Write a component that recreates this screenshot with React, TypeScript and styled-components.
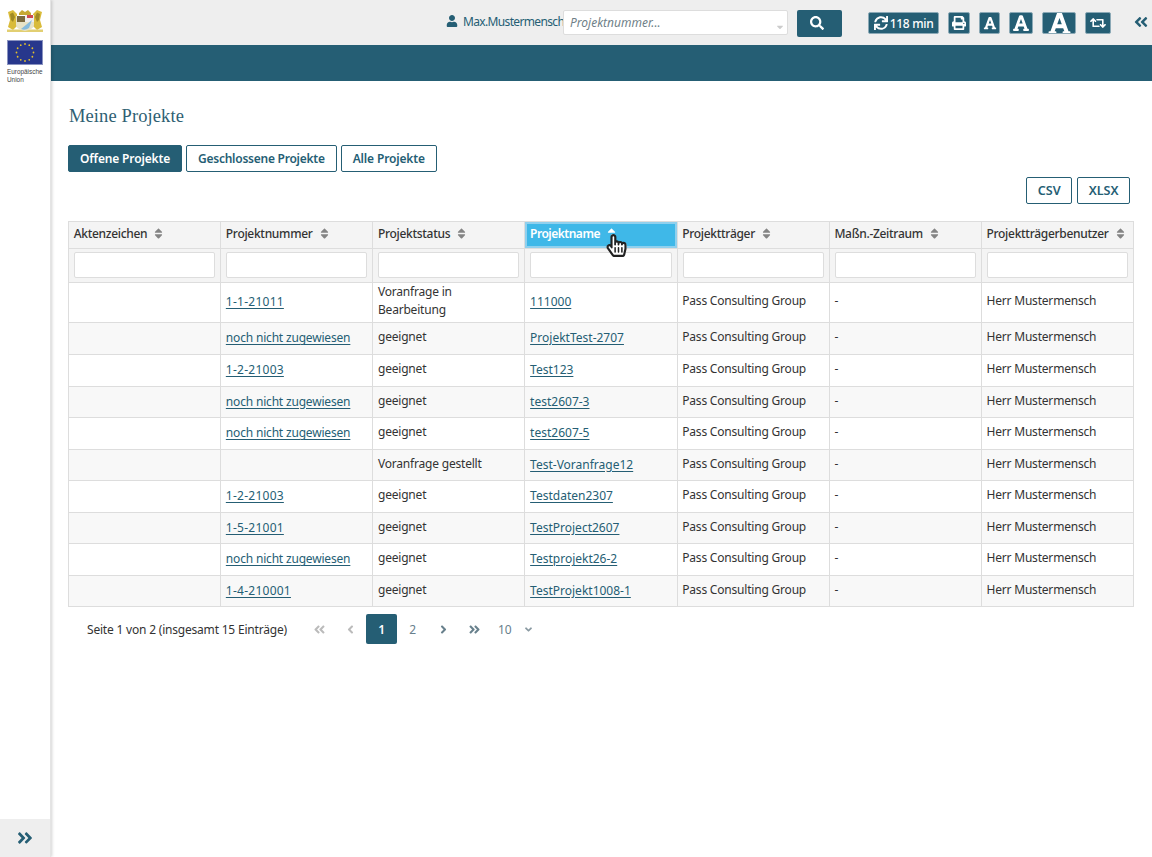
import React from "react";
import styled, { createGlobalStyle } from "styled-components";
import {
  FaUser, FaSearch, FaSync, FaPrint, FaFont, FaRetweet, FaAngleDoubleLeft, FaAngleDoubleRight,
  FaAngleLeft, FaAngleRight, FaAngleDown, FaSort, FaSortUp, FaRegHandPointer, FaHandPointer, FaCaretDown,
} from "react-icons/fa";

const TEAL = "#255e74";
const SANS = `"Noto Sans", "Liberation Sans", sans-serif`;

const Global = createGlobalStyle`
  html, body { margin: 0; padding: 0; background: #fff; }
  body { font-family: ${SANS}; font-size: 13px; color: #333; }
  * { box-sizing: border-box; }
`;

const Page = styled.div`
  display: flex;
  width: 1152px;
  height: 857px;
  overflow: hidden;
`;

const Sidebar = styled.aside`
  width: 51px;
  flex: none;
  display: flex;
  flex-direction: column;
  background: #fff;
  border-right: 1px solid #e4e4e4;
  box-shadow: 1px 0 3px rgba(0, 0, 0, 0.18);
  z-index: 1;
`;

const Logos = styled.div`
  flex: 1;
  display: flex;
  flex-direction: column;
  padding: 9px 0 0 7px;
`;

const EuCaption = styled.div`
  font-family: "Liberation Sans", sans-serif;
  font-size: 6.4px;
  line-height: 7.5px;
  color: #444;
  margin-top: 3px;
`;

const Crest = styled.svg`
  display: block;
  filter: blur(0.35px);
`;

const Flag = styled.svg`
  margin-top: 8px;
  display: block;
`;

const SideFooter = styled.div`
  height: 38px;
  background: #eee;
  display: flex;
  align-items: center;
  justify-content: center;
  color: ${TEAL};
  font-size: 18px;
`;

const Main = styled.main`
  flex: 1;
  display: flex;
  flex-direction: column;
  min-width: 0;
`;

const TopBar = styled.header`
  height: 45px;
  background: #eee;
  display: flex;
  align-items: flex-start;
  padding-top: 10px;
`;

const UserName = styled.div`
  margin-left: 395px;
  width: 117px;
  height: 22px;
  display: flex;
  align-items: center;
  gap: 5px;
  color: ${TEAL};
  font-size: 12px;
  letter-spacing: -0.65px;
  white-space: nowrap;
  svg { font-size: 12px; flex: none; }
`;

const SearchBox = styled.div`
  width: 225px;
  height: 25px;
  background: #fff;
  border: 1px solid #ddd;
  border-radius: 2px;
  display: flex;
  align-items: center;
  justify-content: space-between;
  padding: 0 2px 0 6px;
  font-size: 12px;
  font-style: italic;
  color: #6f7f88;
  svg { color: #ccc; font-size: 10px; margin-top: 9px; }
`;

const SearchButton = styled.button`
  width: 45px;
  height: 27px;
  margin-left: 9px;
  border: 0;
  border-radius: 2px;
  background: ${TEAL};
  color: #fff;
  padding: 0 5px 2px 0;
  font-size: 14px;
  display: flex;
  align-items: center;
  justify-content: center;
`;

const Tools = styled.div`
  display: flex;
  align-items: center;
  height: 22px;
  margin-top: 2px;
  margin-left: 26px;
  gap: 9px;
`;

const ToolButton = styled.button<{ $w: number; $icon?: number }>`
  width: ${(p) => p.$w}px;
  height: 22px;
  border: 1px solid #8ba9b6;
  border-radius: 2px;
  background: ${TEAL};
  color: #fff;
  padding: 0;
  display: flex;
  align-items: center;
  justify-content: center;
  gap: 2px;
  overflow: hidden;
  font-family: ${SANS};
  font-size: 12px;
  font-weight: 500;
  letter-spacing: -0.3px;
  white-space: nowrap;
  svg { font-size: ${(p) => p.$icon ?? 14}px; flex: none; }
`;

const CollapseLeft = styled.div`
  margin-left: 22px;
  margin-top: 4px;
  color: ${TEAL};
  font-size: 16px;
  display: flex;
`;

const Band = styled.div`
  height: 36px;
  background: ${TEAL};
`;

const Content = styled.div`
  flex: 1;
  padding: 24px 18px 0 17px;
`;

const Title = styled.h1`
  margin: 0;
  padding-left: 1px;
  font-family: "Liberation Serif", serif;
  font-weight: 400;
  font-size: 18.5px;
  line-height: 22px;
  letter-spacing: 0.1px;
  color: #2f5f73;
`;

const TabRow = styled.div`
  display: flex;
  gap: 4px;
  margin-top: 18px;
`;

const OutlineButton = styled.button<{ $active?: boolean; $tight?: boolean }>`
  height: 27px;
  padding: 0 11px;
  border: 1px solid ${TEAL};
  border-radius: 2px;
  background: ${(p) => (p.$active ? TEAL : "#fff")};
  color: ${(p) => (p.$active ? "#fff" : TEAL)};
  font-family: ${SANS};
  font-size: 12px;
  font-weight: 600;
  letter-spacing: ${(p) => (p.$tight ? "-0.25px" : "-0.15px")};
  white-space: nowrap;
`;

const ExportButton = styled(OutlineButton)`
  padding: 0 10.5px;
  font-size: 12.6px;
  letter-spacing: 0;
`;

const ExportRow = styled.div`
  display: flex;
  justify-content: flex-end;
  gap: 5px;
  margin-top: 5px;
  height: 27px;
  padding-right: 4px;
`;

const Table = styled.table`
  width: 1066px;
  margin-top: 17px;
  border-collapse: collapse;
  table-layout: fixed;
  font-size: 12px;
  letter-spacing: -0.2px;
`;

const HeadCell = styled.th<{ $active?: boolean }>`
  position: relative;
  height: 27px;
  padding: 0 4px 3px 4.7px;
  border: 1px solid #ddd;
  text-align: left;
  white-space: nowrap;
  letter-spacing: ${(p) => (p.$active ? "-0.5px" : "-0.3px")};
  color: ${(p) => (p.$active ? "#fff" : "#333")};
  background: ${(p) => (p.$active ? "#3fb8e8" : "#f4f4f4")};
  box-shadow: ${(p) => (p.$active ? "inset 0 0 0 2px #8fd0ee" : "none")};
  font-weight: ${(p) => (p.$active ? 600 : 500)};
  svg { margin-left: 5px; font-size: 13px; vertical-align: -2px; color: ${(p) => (p.$active ? "#fff" : "#848484")}; }
`;

const HandCursor = styled.span`
  position: absolute;
  left: 79.5px;
  top: 12px;
  width: 20px;
  height: 23px;
  svg { position: absolute; left: 0; top: 0; margin: 0; font-size: 23px; }
  svg.fill { color: #fff; }
  svg.line { color: #222; }
`;

const FilterCell = styled.td`
  height: 33px;
  padding: 3px 5px 4px;
  border: 1px solid #ddd;
  background: #f4f4f4;
`;

const FilterInput = styled.div`
  height: 26px;
  border: 1px solid #ddd;
  border-radius: 2px;
  background: #fff;
`;

const Row = styled.tr<{ $odd: boolean; $h: number }>`
  height: ${(p) => p.$h}px;
  background: ${(p) => (p.$odd ? "#f8f8f8" : "#fff")};
`;

const Cell = styled.td`
  padding: 0 4px 3.5px 4.7px;
  border: 1px solid #ddd;
  line-height: 17.5px;
  color: #333;
  vertical-align: middle;
`;

const LinkCell = styled(Cell)`
  padding-bottom: 1px;
`;

const TableLink = styled.a<{ $spacing: number }>`
  color: ${TEAL};
  text-decoration: underline;
  text-underline-offset: 2px;
  letter-spacing: ${(p) => p.$spacing}px;
`;

const Pager = styled.div`
  display: flex;
  align-items: center;
  height: 30px;
  margin-top: 7px;
  padding-left: 19px;
  font-size: 12px;
  letter-spacing: -0.2px;
`;

const PagerText = styled.span`
  width: 217px;
  white-space: nowrap;
`;

const PageItem = styled.span<{ $active?: boolean; $muted?: boolean }>`
  width: 31px;
  height: 30px;
  flex: none;
  display: flex;
  align-items: center;
  justify-content: center;
  border-radius: 2px;
  background: ${(p) => (p.$active ? TEAL : "transparent")};
  color: ${(p) => (p.$active ? "#fff" : p.$muted ? "#bbb" : "#68808c")};
  font-weight: ${(p) => (p.$active ? 600 : 400)};
  font-size: 12px;
  svg { font-size: 13px; }
`;

const PageSize = styled.span`
  display: flex;
  align-items: center;
  gap: 12px;
  margin-left: 8px;
  color: #68808c;
  svg { font-size: 11px; color: #8a9aa2; }
`;

const Wappen = () => (
  <Crest width="36" height="23" viewBox="0 0 36 23" aria-hidden="true">
    <path d="M1 3 L6 1 L10 5 L10 17 L6 21 L1 18 L3 11 Z" fill="#d9bb3a" />
    <path d="M35 3 L30 1 L26 5 L26 17 L30 21 L35 18 L33 11 Z" fill="#d9bb3a" />
    <path d="M3 5 L6 3.5 L8 8 L6 13 L4 11 Z" fill="#a08a24" />
    <path d="M33 5 L30 3.5 L28 8 L30 13 L32 11 Z" fill="#a08a24" />
    <rect x="0" y="20.5" width="36" height="2.5" fill="#e2cf72" />
    <path d="M9 7 H27 V16 Q27 20 18 22 Q9 20 9 16 Z" fill="#e8e3c6" />
    <rect x="10" y="7" width="8" height="6" fill="#7b6a3e" />
    <rect x="18" y="6" width="9" height="7" fill="#eeeeee" />
    <rect x="20" y="6" width="6" height="3" fill="#cf4a50" />
    <path d="M14 20 L25 11 L22 19 Q18 22 14 20 Z" fill="#86bbdd" />
    <path d="M12 4 L15 1 L18 3 L21 1 L24 4 V6 H12 Z" fill="#c6a832" />
  </Crest>
);

const EuFlag = () => {
  const stars = Array.from({ length: 12 }, (_, i) => {
    const a = (i * Math.PI) / 6;
    return <circle key={i} cx={18 + 8.5 * Math.sin(a)} cy={12.5 - 8.5 * Math.cos(a)} r="0.9" fill="#e3c02c" />;
  });
  return (
    <Flag width="36" height="25" viewBox="0 0 36 25" aria-hidden="true">
      <rect x="0.5" y="0.5" width="35" height="24" fill="#27378c" stroke="#8a93c0" />
      {stars}
    </Flag>
  );
};

const columns = ["Aktenzeichen", "Projektnummer", "Projektstatus", "Projektname", "Projektträger", "Maßn.-Zeitraum", "Projektträgerbenutzer"];

const TEXT_NR = "noch nicht zugewiesen";

const rows: { nr: string; status: React.ReactNode; name: string; h: number }[] = [
  { nr: "1-1-21011", status: <>Voranfrage in<br />Bearbeitung</>, name: "111000", h: 40 },
  { nr: TEXT_NR, status: "geeignet", name: "ProjektTest-2707", h: 32 },
  { nr: "1-2-21003", status: "geeignet", name: "Test123", h: 32 },
  { nr: TEXT_NR, status: "geeignet", name: "test2607-3", h: 31 },
  { nr: TEXT_NR, status: "geeignet", name: "test2607-5", h: 32 },
  { nr: "", status: "Voranfrage gestellt", name: "Test-Voranfrage12", h: 31 },
  { nr: "1-2-21003", status: "geeignet", name: "Testdaten2307", h: 32 },
  { nr: "1-5-21001", status: "geeignet", name: "TestProject2607", h: 31 },
  { nr: TEXT_NR, status: "geeignet", name: "Testprojekt26-2", h: 32 },
  { nr: "1-4-210001", status: "geeignet", name: "TestProjekt1008-1", h: 31 },
];

export default function App() {
  return (
    <Page>
      <Global />
      <Sidebar>
        <Logos>
          <Wappen />
          <EuFlag />
          <EuCaption>Europäische<br />Union</EuCaption>
        </Logos>
        <SideFooter><FaAngleDoubleRight /></SideFooter>
      </Sidebar>
      <Main>
        <TopBar>
          <UserName><FaUser />Max.Mustermensch</UserName>
          <SearchBox>Projektnummer...<FaCaretDown /></SearchBox>
          <SearchButton aria-label="Suchen"><FaSearch /></SearchButton>
          <Tools>
            <ToolButton $w={71} $icon={14}><FaSync />118 min</ToolButton>
            <ToolButton $w={22}><FaPrint /></ToolButton>
            <ToolButton $w={21} $icon={14}><FaFont /></ToolButton>
            <ToolButton $w={24} $icon={18}><FaFont /></ToolButton>
            <ToolButton $w={34} $icon={25}><FaFont /></ToolButton>
            <ToolButton $w={26} $icon={16}><FaRetweet /></ToolButton>
          </Tools>
          <CollapseLeft><FaAngleDoubleLeft /></CollapseLeft>
        </TopBar>
        <Band />
        <Content>
          <Title>Meine Projekte</Title>
          <TabRow>
            <OutlineButton $active>Offene Projekte</OutlineButton>
            <OutlineButton $tight>Geschlossene Projekte</OutlineButton>
            <OutlineButton>Alle Projekte</OutlineButton>
          </TabRow>
          <ExportRow>
            <ExportButton>CSV</ExportButton>
            <ExportButton>XLSX</ExportButton>
          </ExportRow>
          <Table>
            <thead>
              <tr>
                {columns.map((label) => {
                  const active = label === "Projektname";
                  return (
                    <HeadCell key={label} $active={active}>
                      {label}
                      {active ? <FaSortUp /> : <FaSort />}
                      {active && (
                        <HandCursor>
                          <FaHandPointer className="fill" />
                          <FaRegHandPointer className="line" />
                        </HandCursor>
                      )}
                    </HeadCell>
                  );
                })}
              </tr>
              <tr>
                {columns.map((c) => (
                  <FilterCell key={c}><FilterInput /></FilterCell>
                ))}
              </tr>
            </thead>
            <tbody>
              {rows.map((r, i) => (
                <Row key={r.name} $odd={i % 2 === 1} $h={r.h}>
                  <Cell />
                  <LinkCell>
                    {r.nr && <TableLink $spacing={r.nr === TEXT_NR ? -0.18 : 0.25}>{r.nr}</TableLink>}
                  </LinkCell>
                  <Cell>{r.status}</Cell>
                  <LinkCell><TableLink $spacing={0}>{r.name}</TableLink></LinkCell>
                  <Cell>Pass Consulting Group</Cell>
                  <Cell>-</Cell>
                  <Cell>Herr Mustermensch</Cell>
                </Row>
              ))}
            </tbody>
          </Table>
          <Pager>
            <PagerText>Seite 1 von 2 (insgesamt 15 Einträge)</PagerText>
            <PageItem $muted><FaAngleDoubleLeft /></PageItem>
            <PageItem $muted><FaAngleLeft /></PageItem>
            <PageItem $active>1</PageItem>
            <PageItem>2</PageItem>
            <PageItem><FaAngleRight /></PageItem>
            <PageItem><FaAngleDoubleRight /></PageItem>
            <PageSize>10 <FaAngleDown /></PageSize>
          </Pager>
        </Content>
      </Main>
    </Page>
  );
}
